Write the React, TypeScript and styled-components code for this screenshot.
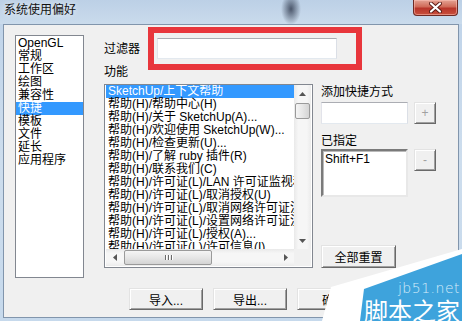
import React from "react";
import styled, { createGlobalStyle } from "styled-components";

const FONT = `"Liberation Sans", "Noto Sans CJK SC", sans-serif`;

const Global = createGlobalStyle`
  html, body { margin: 0; padding: 0; width: 462px; height: 321px; overflow: hidden; background: #c9dbee; }
  * { box-sizing: border-box; }
`;

const Window = styled.div`
  position: relative;
  width: 462px;
  height: 321px;
  display: flex;
  flex-direction: column;
  background: linear-gradient(180deg, #bfd3e9 0%, #cddded 50%, #c6d9ec 100%);
  font-family: ${FONT};
  font-size: 12px;
  color: #000;
  overflow: hidden;
`;

const TitleBar = styled.div`
  height: 24px;
  flex: none;
  display: flex;
  align-items: flex-start;
  padding-left: 4px;
  background:
    radial-gradient(ellipse 10px 16px at 291px 9px, rgba(45, 55, 75, 0.8), rgba(45, 55, 75, 0) 100%),
    linear-gradient(180deg, #bcd0e6 0%, #cadbec 100%);
`;

const Title = styled.span`
  padding-top: 2px;
  line-height: 16px;
  font-size: 12px;
  color: #111;
  text-shadow: 0 0 6px rgba(255, 255, 255, 0.9);
`;

const CloseButton = styled.div`
  margin-left: auto;
  margin-right: 4px;
  width: 45px;
  height: 16px;
  border: 1px solid #6e2a24;
  border-top: none;
  border-radius: 0 0 4px 4px;
  background: linear-gradient(180deg, #e4a394 0%, #d06a58 45%, #b8352a 55%, #c9503c 100%);
  display: flex;
  align-items: center;
  justify-content: center;
  box-shadow: inset 0 0 0 1px rgba(255, 200, 190, 0.5);
`;

const Client = styled.div`
  flex: 1;
  margin: 0 3px 3px 3px;
  border: 1px solid #8195ac;
  background: #f0f0f0;
  display: flex;
  flex-direction: column;
`;

const TopSection = styled.div`
  display: flex;
  align-items: flex-start;
  padding: 10px 0 0 11px;
`;

const CategoryList = styled.div`
  width: 69px;
  height: 243px;
  flex: none;
  border: 1px solid #828790;
  background: #fff;
  padding-top: 1px;
`;

const ListItem = styled.div<{ $selected?: boolean }>`
  height: 13px;
  line-height: 13px;
  padding-left: 2px;
  white-space: nowrap;
  background: ${(p) => (p.$selected ? "#3399ff" : "transparent")};
  color: ${(p) => (p.$selected ? "#fff" : "#000")};
`;

const Main = styled.div`
  margin-left: 20px;
  margin-top: 3px;
  display: flex;
  flex-direction: column;
`;

const FilterRow = styled.div`
  display: flex;
  align-items: center;
  height: 21px;
`;

const Label = styled.div<{ $w?: number }>`
  width: ${(p) => (p.$w ? `${p.$w}px` : "auto")};
  line-height: 16px;
  white-space: nowrap;
`;

const Highlight = styled.div`
  position: relative;
`;

const RedFrame = styled.div`
  position: absolute;
  left: -9px;
  top: -11px;
  right: -25px;
  bottom: -11px;
  border: 6px solid #e8363c;
  pointer-events: none;
`;

const TextBox = styled.div<{ $w: number; $h: number }>`
  width: ${(p) => p.$w}px;
  height: ${(p) => p.$h}px;
  background: #fff;
  border: 1px solid;
  border-color: #abadb3 #dbdfe6 #e3e9ef #e2e3ea;
`;

const FuncLabel = styled(Label)`
  margin-top: 5px;
`;

const FuncRow = styled.div`
  display: flex;
  gap: 8px;
  margin-top: 4px;
`;

const ListBox = styled.div`
  width: 209px;
  height: 184px;
  border: 1px solid #828790;
  background: #fff;
  padding: 0 1px 1px 1px;
  display: grid;
  grid-template-columns: 1fr 17px;
  grid-template-rows: 1fr 17px;
`;

const ListRows = styled.div`
  overflow: hidden;
`;

const VScroll = styled.div`
  display: flex;
  flex-direction: column;
  background: linear-gradient(90deg, #e9e9e9 0%, #f6f6f6 25%, #f6f6f6 75%, #ececec 100%);
`;

const HScroll = styled.div`
  display: flex;
  background: linear-gradient(180deg, #e9e9e9 0%, #f6f6f6 25%, #f6f6f6 75%, #ececec 100%);
`;

const Corner = styled.div`
  background: #f0f0f0;
`;

const ScrollBtn = styled.div`
  width: 17px;
  height: 17px;
  flex: none;
  display: flex;
  align-items: center;
  justify-content: center;
`;

const Track = styled.div`
  flex: 1;
  display: flex;
`;

const VThumb = styled.div`
  width: 15px;
  height: 16px;
  margin: 1px 1px 0 1px;
  border: 1px solid #9a9a9a;
  border-radius: 2px;
  background: linear-gradient(90deg, #f5f5f5 0%, #e6e6e6 50%, #d4d4d4 100%);
`;

const HThumb = styled.div`
  width: 88px;
  height: 15px;
  margin: 1px 0 1px 1px;
  border: 1px solid #9a9a9a;
  border-radius: 2px;
  background: linear-gradient(180deg, #f5f5f5 0%, #e6e6e6 50%, #d4d4d4 100%);
  display: flex;
  align-items: center;
  justify-content: center;
  gap: 2px;
`;

const Grip = styled.span`
  width: 1px;
  height: 5px;
  background: #6a6a6a;
  box-shadow: 1px 0 0 #fff;
`;

const RightPanel = styled.div`
  width: 116px;
  height: 184px;
  display: flex;
  flex-direction: column;
`;

const ControlRow = styled.div<{ $mt: number }>`
  display: flex;
  align-items: flex-start;
  gap: 6px;
  margin-top: ${(p) => p.$mt}px;
`;

const SectionLabel = styled(Label)<{ $mt: number }>`
  margin-top: ${(p) => p.$mt}px;
`;

const AssignedBox = styled.div`
  width: 87px;
  height: 48px;
  background: #fff;
  border: 2px solid;
  border-color: #7a7a7a #e8e8e8 #e8e8e8 #7a7a7a;
  box-shadow: inset 1px 1px 0 #b9b9b9;
  padding: 1px 2px;
  line-height: 14px;
`;

const Button3D = styled.div<{ $w: number; $h?: number; $muted?: boolean }>`
  width: ${(p) => p.$w}px;
  height: ${(p) => p.$h ?? 22}px;
  flex: none;
  display: flex;
  align-items: center;
  justify-content: center;
  background: #f0f0f0;
  border: 1px solid;
  border-color: #e3e3e3 #696969 #696969 #e3e3e3;
  box-shadow: inset 1px 1px 0 #ffffff, inset -1px -1px 0 #a0a0a0;
  color: ${(p) => (p.$muted ? "#a0a0a0" : "#000")};
  white-space: nowrap;
`;

const ResetButton = styled(Button3D)`
  margin-top: auto;
`;

const ButtonRow = styled.div`
  display: flex;
  gap: 10px;
  padding: 10px 0 0 125px;
`;

const Watermark = styled.div`
  position: absolute;
  right: 0;
  bottom: 0;
  width: 145px;
  height: 72px;
  pointer-events: none;
`;

const WmSvg = styled.svg`
  position: absolute;
  inset: 0;
`;

const WmSite = styled.span`
  position: absolute;
  right: 2px;
  top: 31px;
  font-family: "DejaVu Sans", sans-serif;
  font-size: 14px;
  font-weight: 300;
  letter-spacing: 0.5px;
  color: #d6ecfa;
`;

const WmName = styled.span`
  position: absolute;
  right: 2px;
  bottom: -4px;
  font-family: "Noto Sans CJK SC", sans-serif;
  font-size: 24px;
  line-height: 30px;
  color: #ffffff;
`;

const Arrow: React.FC<{ dir: "up" | "down" | "left" | "right" }> = ({ dir }) => {
  const vertical = dir === "up" || dir === "down";
  const pts = {
    up: "0,4 3.5,0 7,4",
    down: "0,0 3.5,4 7,0",
    left: "4,0 0,3.5 4,7",
    right: "0,0 4,3.5 0,7",
  }[dir];
  return (
    <svg width={vertical ? 7 : 4} height={vertical ? 4 : 7}>
      <polygon points={pts} fill="#555" />
    </svg>
  );
};

const categories = ["OpenGL", "常规", "工作区", "绘图", "兼容性", "快捷", "模板", "文件", "延长", "应用程序"];

const functions = [
  "SketchUp/上下文帮助",
  "帮助(H)/帮助中心(H)",
  "帮助(H)/关于 SketchUp(A)...",
  "帮助(H)/欢迎使用 SketchUp(W)...",
  "帮助(H)/检查更新(U)...",
  "帮助(H)/了解 ruby 插件(R)",
  "帮助(H)/联系我们(C)",
  "帮助(H)/许可证(L)/LAN 许可证监视和管理",
  "帮助(H)/许可证(L)/取消授权(U)",
  "帮助(H)/许可证(L)/取消网络许可证注册",
  "帮助(H)/许可证(L)/设置网络许可证注册",
  "帮助(H)/许可证(L)/授权(A)...",
  "帮助(H)/许可证(L)/许可信息(I)",
];

export default function App() {
  return (
    <>
      <Global />
      <Window>
        <TitleBar>
          <Title>系统使用偏好</Title>
          <CloseButton>
            <svg width="13" height="11" viewBox="0 0 13 11">
              <path d="M2 1.5 L11 9.5 M11 1.5 L2 9.5" stroke="#5a1a14" strokeWidth="4" strokeLinecap="round" />
              <path d="M2 1.5 L11 9.5 M11 1.5 L2 9.5" stroke="#ffffff" strokeWidth="2.2" strokeLinecap="round" />
            </svg>
          </CloseButton>
        </TitleBar>
        <Client>
          <TopSection>
            <CategoryList>
              {categories.map((c) => (
                <ListItem key={c} $selected={c === "快捷"}>
                  {c}
                </ListItem>
              ))}
            </CategoryList>
            <Main>
              <FilterRow>
                <Label $w={53}>过滤器</Label>
                <Highlight>
                  <TextBox $w={180} $h={21} />
                  <RedFrame />
                </Highlight>
              </FilterRow>
              <FuncLabel>功能</FuncLabel>
              <FuncRow>
                <ListBox>
                  <ListRows>
                    {functions.map((f, i) => (
                      <ListItem key={f} $selected={i === 0}>
                        {f}
                      </ListItem>
                    ))}
                  </ListRows>
                  <VScroll>
                    <ScrollBtn>
                      <Arrow dir="up" />
                    </ScrollBtn>
                    <Track>
                      <VThumb />
                    </Track>
                    <ScrollBtn>
                      <Arrow dir="down" />
                    </ScrollBtn>
                  </VScroll>
                  <HScroll>
                    <ScrollBtn>
                      <Arrow dir="left" />
                    </ScrollBtn>
                    <Track>
                      <HThumb>
                        <Grip />
                        <Grip />
                        <Grip />
                      </HThumb>
                    </Track>
                    <ScrollBtn>
                      <Arrow dir="right" />
                    </ScrollBtn>
                  </HScroll>
                  <Corner />
                </ListBox>
                <RightPanel>
                  <Label>添加快捷方式</Label>
                  <ControlRow $mt={2}>
                    <TextBox $w={87} $h={22} />
                    <Button3D $w={22} $muted>
                      +
                    </Button3D>
                  </ControlRow>
                  <SectionLabel $mt={9}>已指定</SectionLabel>
                  <ControlRow $mt={0}>
                    <AssignedBox>Shift+F1</AssignedBox>
                    <Button3D $w={22} $muted>
                      -
                    </Button3D>
                  </ControlRow>
                  <ResetButton $w={75} $h={23}>
                    全部重置
                  </ResetButton>
                </RightPanel>
              </FuncRow>
            </Main>
          </TopSection>
          <ButtonRow>
            <Button3D $w={74}>导入...</Button3D>
            <Button3D $w={74}>导出...</Button3D>
            <Button3D $w={74}>确定</Button3D>
          </ButtonRow>
        </Client>
        <Watermark>
          <WmSvg width="145" height="72" viewBox="0 0 145 72">
            <polygon points="5,72 14,38 145,0 145,72" fill="#ffffff" />
            <polygon points="43,72 47,40 145,5 145,72" fill="#3ea3dc" />
          </WmSvg>
          <WmSite>jb51.net</WmSite>
          <WmName>脚本之家</WmName>
        </Watermark>
      </Window>
    </>
  );
}
